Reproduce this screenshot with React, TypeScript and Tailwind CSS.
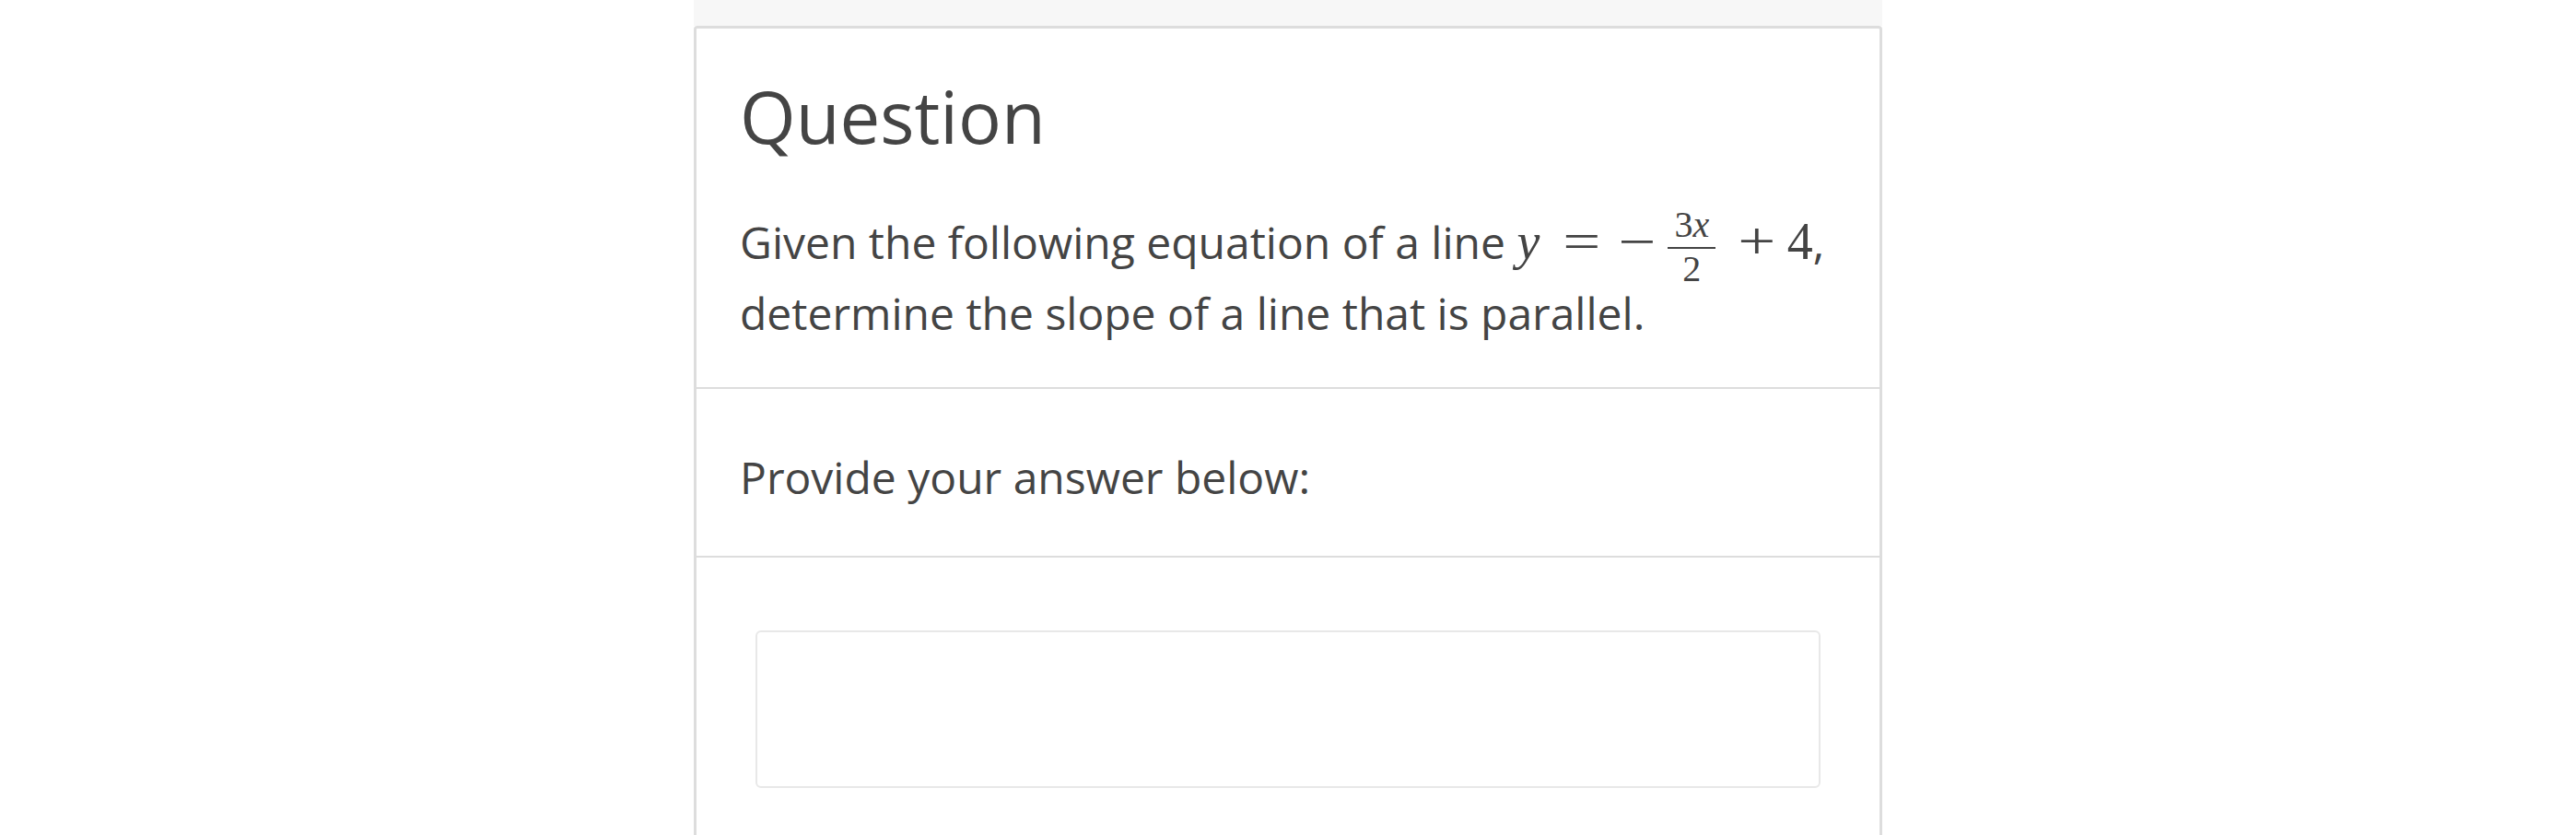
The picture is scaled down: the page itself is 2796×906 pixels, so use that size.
export default function App() {
  return (
    <div className="w-full min-h-[906px] bg-white flex justify-center" style={{ fontFamily: '"Open Sans", "Noto Sans", sans-serif' }}>
      <div className="w-[1290px] flex flex-col">
        <div className="h-[28px] bg-[#f7f7f7]" />
        <div className="flex-1 border-[3px] border-b-0 border-[#dddddd] rounded-t-[4px] bg-white text-[#444444]">
          <div className="pt-[49px] pl-[47px] pr-[30px] pb-[42px] border-b-2 border-[#dddddd]">
            <h2 className="text-[78px] leading-[1.2] font-normal">Question</h2>
            <p className="mt-[50px] text-[48px] leading-[77px]">
              Given the following equation of a line{' '}
              <span className="text-[56px] whitespace-nowrap" style={{ fontFamily: '"Liberation Serif", "DejaVu Serif", serif' }}>
                <span className="italic">y</span>
                <span className="inline-block scale-x-[1.3] ml-[30px] mr-[28px]">=</span>
                <span className="inline-block scale-x-[1.3] mr-[18px]">−</span>
                <span className="inline-flex flex-col items-center align-[24px] -my-[20px] leading-none">
                  <span className="text-[40px] px-[7px]">
                    3<span className="italic">x</span>
                  </span>
                  <span className="h-[2px] w-full bg-[#444444] mt-[4px] mb-[2px]" />
                  <span className="text-[40px] px-[7px]">2</span>
                </span>
                <span className="inline-block scale-x-[1.3] ml-[29px] mr-[17px]">+</span>
                <span>4</span>
              </span>
              ,
              <br />
              determine the slope of a line that is parallel.
            </p>
          </div>
          <div className="pt-[57px] pl-[47px] pr-[30px] pb-[47px] border-b-2 border-[#dddddd]">
            <p className="text-[48px] leading-[77px]">Provide your answer below:</p>
          </div>
          <div className="pt-[79px] pb-[40px]">
            <div className="ml-[64px] w-[1156px] h-[171px] border-2 border-[#e8e8e8] rounded-[6px] bg-white" />
          </div>
        </div>
      </div>
    </div>
  );
}
